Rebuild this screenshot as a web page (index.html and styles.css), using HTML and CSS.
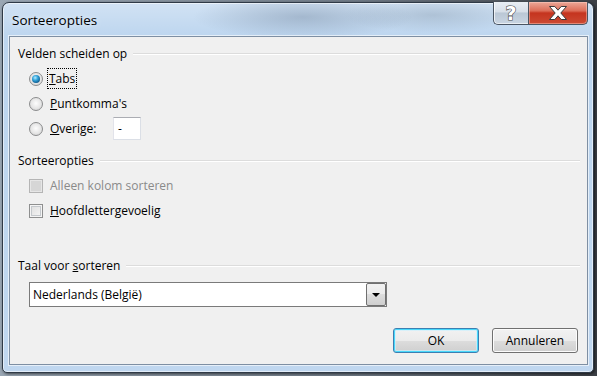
FILE: index.html
```html
<!DOCTYPE html>
<html lang="nl">
<head>
  <meta charset="UTF-8" />
  <title>Sorteeropties</title>
  <link rel="stylesheet" href="styles.css">
</head>
<body>
  <div class="window">
    <div class="titlebar">
      <span class="title">Sorteeropties</span>
      <div class="caption">
        <div class="cap-btn help">?</div>
        <div class="cap-btn close">
          <svg width="20" height="16" viewBox="0 0 20 16">
            <path d="M1.5 1.5H6.8L10 5.2 13.2 1.5H18.5L12.8 8 18.5 14.5H13.2L10 10.8 6.8 14.5H1.5L7.2 8Z" fill="#fff" stroke="#3b3b3b" stroke-width="1"/>
          </svg>
        </div>
      </div>
    </div>

    <div class="client">
      <div class="group-head"><span>Velden scheiden op</span></div>
      <div class="options">
        <div class="opt"><span class="radio checked"></span><span class="focus"><u>T</u>abs</span></div>
        <div class="opt"><span class="radio"></span><span><u>P</u>untkomma's</span></div>
        <div class="opt">
          <span class="radio"></span>
          <span class="lbl-other"><u>O</u>verige:</span>
          <span class="textbox">-</span>
        </div>
      </div>

      <div class="group-head second"><span>Sorteeropties</span></div>
      <div class="options">
        <div class="opt disabled"><span class="check"></span><span>Alleen kolom sorteren</span></div>
        <div class="opt"><span class="check"></span><span><u>H</u>oofdlettergevoelig</span></div>
      </div>

      <div class="group-head third"><span>Taal voor <u>s</u>orteren</span></div>
      <div class="combo">
        <span class="combo-text">Nederlands (België)</span>
        <span class="combo-arrow"></span>
      </div>

      <div class="buttons">
        <button class="btn default">OK</button>
        <button class="btn">Annuleren</button>
      </div>
    </div>
  </div>
</body>
</html>
```

FILE: styles.css
```css
html, body {
  margin: 0;
  width: 597px;
  height: 376px;
  overflow: hidden;
}

body {
  background: linear-gradient(90deg, #9aa7b4 0, #6f7a86 60%, #3c4046 100%);
  font-family: 'Open Sans', 'Liberation Sans', sans-serif;
  font-size: 12px;
  color: #000;
}

.window {
  box-sizing: border-box;
  margin: 2px 0 0 2px;
  width: 592px;
  height: 371px;
  padding: 0 5px 7px 6px;
  border: 1px solid #2f3a47;
  border-radius: 7px 7px 5px 5px;
  background:
    radial-gradient(ellipse 110px 22px at 300px 14px, rgba(95, 115, 140, 0.35), transparent),
    radial-gradient(ellipse 90px 18px at 430px 12px, rgba(110, 130, 150, 0.3), transparent),
    linear-gradient(180deg, rgba(255, 255, 255, 0.35) 0, rgba(255, 255, 255, 0.05) 34px, rgba(255, 255, 255, 0.1) 100%),
    #b9d3ee;
  box-shadow: 1px 1px 3px rgba(0, 0, 0, 0.6), inset 0 0 0 1px rgba(255, 255, 255, 0.55);
  display: flex;
  flex-direction: column;
}

.titlebar {
  height: 33px;
  display: flex;
  justify-content: space-between;
  align-items: center;
  flex: none;
}

.title {
  margin-left: 3px;
  font-size: 13.5px;
  text-shadow: 0 0 6px rgba(255, 255, 255, 0.9);
}

.caption {
  align-self: flex-start;
  margin-top: -1px;
  display: flex;
}

.cap-btn {
  box-sizing: border-box;
  height: 23px;
  display: flex;
  align-items: center;
  justify-content: center;
  border: 1px solid #4a5563;
  border-top: none;
}

.help {
  width: 35px;
  border-right: none;
  border-radius: 0 0 0 5px;
  background: linear-gradient(180deg, #e9eef4 0, #d6dee8 45%, #bac7d5 50%, #c9d5e2 100%);
  box-shadow: inset 1px 0 0 rgba(255, 255, 255, 0.7), inset 0 -1px 0 rgba(255, 255, 255, 0.6);
  color: #fff;
  font-family: 'DejaVu Sans', sans-serif;
  font-weight: bold;
  font-size: 19px;
  line-height: 1;
  -webkit-text-stroke: 1.2px #4a4a4a;
  paint-order: stroke fill;
}

.close {
  width: 60px;
  border-radius: 0 0 5px 0;
  background: linear-gradient(180deg, #eba898 0, #dc6d58 40%, #c5341f 50%, #cc4a33 100%);
  box-shadow: inset 0 0 0 1px rgba(255, 210, 200, 0.45);
}

.client {
  flex: 1;
  box-sizing: border-box;
  padding: 6px 7px 0 8px;
  background: #f0f0f0;
  border: 1px solid #7e8fa3;
  box-shadow: 0 0 0 1px rgba(255, 255, 255, 0.6);
  display: flex;
  flex-direction: column;
}

.group-head {
  height: 20px;
  display: flex;
  align-items: center;
  gap: 6px;
}

.group-head::after {
  content: '';
  flex: 1;
  height: 1px;
  background: #dcdcdc;
  box-shadow: 0 1px 0 #fff;
}

.group-head.second {
  margin-top: 9px;
}

.group-head.third {
  margin-top: 32px;
}

.options {
  margin: 3px 0 0 11px;
  display: flex;
  flex-direction: column;
}

.opt {
  height: 25px;
  display: flex;
  align-items: center;
  gap: 7px;
}

.opt.disabled {
  color: #8a8a8a;
}

.focus {
  margin-left: -2px;
  padding: 1px 1px;
  outline: 1px dotted #000;
  outline-offset: 0;
}

.radio {
  position: relative;
  flex: none;
  box-sizing: border-box;
  width: 14px;
  height: 14px;
  border-radius: 50%;
  border: 1px solid #8b8c8d;
  background: radial-gradient(circle at 50% 45%, #fdfdfd 0, #e6e6e6 55%, #c9c9c9 100%);
}

.radio.checked::after {
  content: '';
  position: absolute;
  inset: 2px;
  border-radius: 50%;
  background: radial-gradient(circle at 40% 35%, #b8ecff 0, #36a6dc 35%, #0f5c8f 75%, #0a2f4e 100%);
}

.lbl-other {
  width: 56px;
}

.textbox {
  box-sizing: border-box;
  width: 28px;
  height: 23px;
  padding: 2px 0 0 4px;
  background: #fff;
  border: 1px solid #dbdfe6;
  border-top-color: #abadb3;
  border-left-color: #e2e3ea;
}

.check {
  flex: none;
  box-sizing: border-box;
  width: 14px;
  height: 14px;
  border: 1px solid #8e8f8f;
  background: linear-gradient(135deg, #dcdcdc 0, #f7f7f7 100%);
  box-shadow: inset 0 0 0 1px #f4f4f4, inset 0 0 0 2px #c4c8cc;
}

.disabled .check {
  border-color: #b5b5b5;
  background: #d6d6d6;
  box-shadow: inset 0 0 0 1px #e6e6e6;
}

.combo {
  margin: 7px 0 0 11px;
  box-sizing: border-box;
  width: 358px;
  height: 25px;
  background: #fff;
  border: 1px solid #7a7a7a;
  display: flex;
  align-items: center;
  justify-content: space-between;
}

.combo-text {
  padding-left: 3px;
}

.combo-arrow {
  box-sizing: border-box;
  width: 20px;
  height: 23px;
  border: 1px solid #707070;
  border-radius: 2px;
  background: linear-gradient(180deg, #f2f2f2 0, #ebebeb 50%, #dddddd 50%, #cfcfcf 100%);
  display: flex;
  align-items: center;
  justify-content: center;
}

.combo-arrow::after {
  content: '';
  border-left: 4px solid transparent;
  border-right: 4px solid transparent;
  border-top: 4px solid #000;
}

.buttons {
  margin: 21px 2px 0 0;
  display: flex;
  justify-content: flex-end;
  gap: 13px;
}

.btn {
  box-sizing: border-box;
  width: 86px;
  height: 25px;
  padding: 0;
  font: inherit;
  color: #000;
  border: 1px solid #707070;
  border-radius: 3px;
  background: linear-gradient(180deg, #f2f2f2 0, #ebebeb 50%, #dddddd 50%, #cfcfcf 100%);
  box-shadow: inset 0 0 0 1px #fcfcfc;
}

.btn.default {
  border-color: #3c7fb1;
  box-shadow: inset 0 0 0 1px #48d8fb, inset 0 0 0 2px rgba(200, 240, 255, 0.6);
}
```
